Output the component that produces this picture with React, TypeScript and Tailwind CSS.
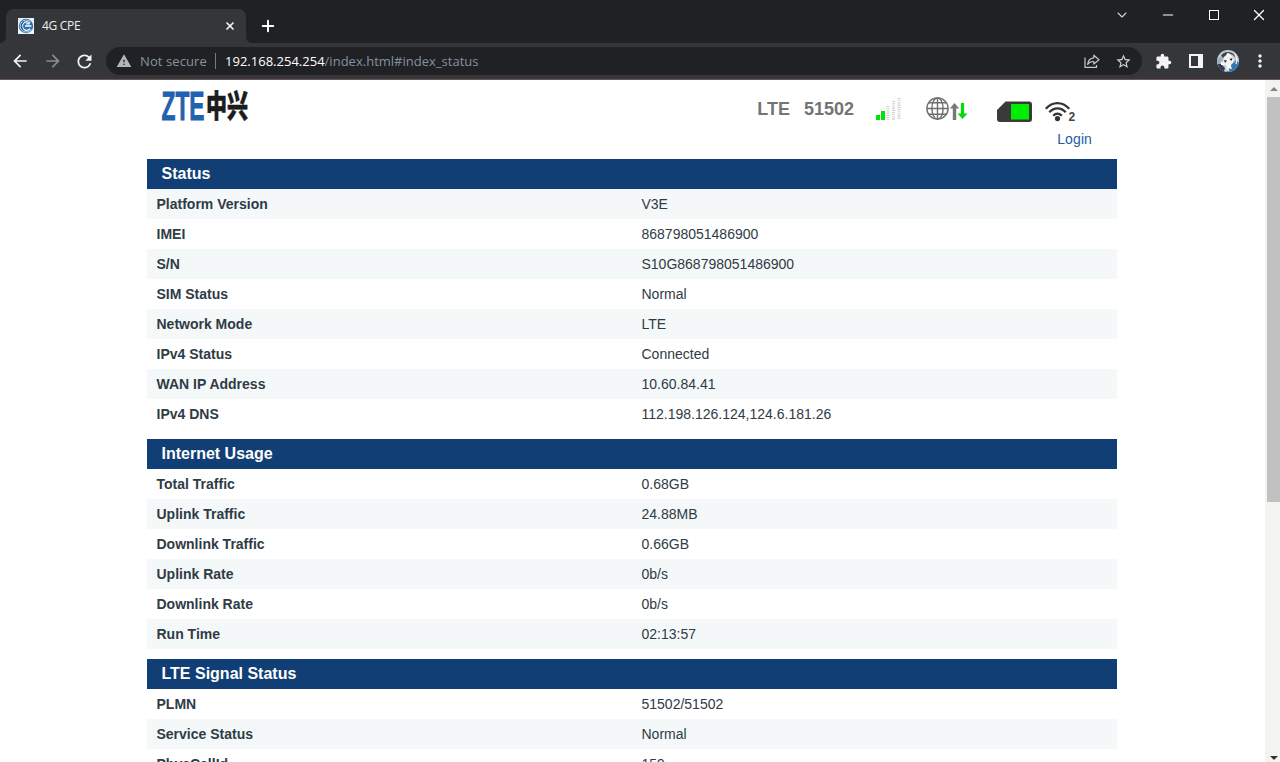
import { ChevronDown, Minus, Plus, X } from 'lucide-react'
import { MdArrowBack, MdArrowForward, MdExtension, MdMoreVert, MdRefresh, MdStarBorder, MdWarning } from 'react-icons/md'
import clsx from 'clsx'

type Row = [label: string, value: string]

const SECTIONS: { title: string; firstTinted: boolean; rows: Row[] }[] = [
  {
    title: 'Status',
    firstTinted: true,
    rows: [
      ['Platform Version', 'V3E'],
      ['IMEI', '868798051486900'],
      ['S/N', 'S10G868798051486900'],
      ['SIM Status', 'Normal'],
      ['Network Mode', 'LTE'],
      ['IPv4 Status', 'Connected'],
      ['WAN IP Address', '10.60.84.41'],
      ['IPv4 DNS', '112.198.126.124,124.6.181.26'],
    ],
  },
  {
    title: 'Internet Usage',
    firstTinted: false,
    rows: [
      ['Total Traffic', '0.68GB'],
      ['Uplink Traffic', '24.88MB'],
      ['Downlink Traffic', '0.66GB'],
      ['Uplink Rate', '0b/s'],
      ['Downlink Rate', '0b/s'],
      ['Run Time', '02:13:57'],
    ],
  },
  {
    title: 'LTE Signal Status',
    firstTinted: false,
    rows: [
      ['PLMN', '51502/51502'],
      ['Service Status', 'Normal'],
      ['PhysCellId', '159'],
    ],
  },
]

function Favicon() {
  return (
    <svg viewBox="0 0 16 16" className="h-4 w-4 shrink-0">
      <rect width="16" height="16" fill="#eef3f7" />
      <circle cx="8" cy="8" r="7.2" fill="#2c70ad" />
      <path d="M12.8 4.2A6 6 0 1 0 13.4 11" fill="none" stroke="#b9d2e8" strokeWidth="1" />
      <path d="M11.8 5.4A4.2 4.2 0 1 0 12 10.6M7 8h6.4M8.2 5.8h3.4" fill="none" stroke="#fff" strokeWidth="1.3" />
      <path d="M6 3.4C3 5 3 10 5.6 12.4" fill="none" stroke="#174b84" strokeWidth="1" />
    </svg>
  )
}

function Avatar() {
  return (
    <svg viewBox="0 0 22 22" className="h-[22px] w-[22px] shrink-0">
      <defs>
        <clipPath id="face">
          <circle cx="11" cy="11" r="11" />
        </clipPath>
      </defs>
      <g clipPath="url(#face)">
        <rect width="22" height="22" fill="#c3ccd3" />
        <path d="M4 6C7 0 17 1 19 8l-3-3-5-2-5 5z" fill="#39414e" />
        <path d="M0 9l5-3 1 4-3 4H0z" fill="#9fb0bf" />
        <path d="M7 7l6-3 4 5-1 6-6 2-4-4z" fill="#f2f1ef" />
        <path d="M7 10l3 .5-2 2.500zM12.500 9l3-1-1 3z" fill="#242a34" />
        <path d="M14 15l5-5 3 3v9H10z" fill="#2e77b3" />
        <path d="M1 14l3 0 4 4-1 3H2z" fill="#2b3d55" />
        <path d="M10 3l3 1-4 5zM13 13l-3 5 5 1zM4 11l4 4-4 0z" fill="#fff" />
        <path d="M18 4l2 5-1 5M9 17l3 4" stroke="#f0f2f4" strokeWidth="1.3" fill="none" />
      </g>
    </svg>
  )
}

function TabStrip() {
  return (
    <div className="flex h-[43px] shrink-0 items-start bg-[#202124]">
      <div className="flex h-[43px] w-[254px] items-end">
        <svg viewBox="0 0 6 6" className="h-1.5 w-1.5 shrink-0">
          <path d="M6 0v6H0a6 6 0 0 0 6-6z" fill="#35363a" />
        </svg>
        <div className="flex h-[34px] w-[240px] items-center rounded-t-lg bg-[#35363a] pr-2.5 pl-3">
          <Favicon />
          <span className="ml-2 flex-1 text-[12px] tracking-[-0.3px] text-[#eceef0]">4G CPE</span>
          <X className="h-3 w-3 text-[#f1f1f1]" strokeWidth={3.4} />
        </div>
        <svg viewBox="0 0 6 6" className="h-1.5 w-1.5 shrink-0">
          <path d="M0 0v6h6a6 6 0 0 1-6-6z" fill="#35363a" />
        </svg>
      </div>
      <Plus className="mt-[17px] ml-[5px] h-[18px] w-[18px] text-white" strokeWidth={2.6} />
      <div className="mt-1.5 ml-auto flex items-center text-white">
        <ChevronDown className="mr-[30px] h-4 w-4 text-[#cfcfcf]" strokeWidth={1.7} />
        <Minus className="mr-[33px] h-4 w-4" strokeWidth={1.6} />
        <span className="mr-[31px] h-2.5 w-2.5 border border-white" />
        <X className="mr-3 h-[18px] w-[18px]" strokeWidth={1.7} />
      </div>
    </div>
  )
}

function Toolbar() {
  return (
    <div className="flex h-[37px] shrink-0 items-center border-b border-[#6b5455] bg-[#35363a] pl-2.5">
      <MdArrowBack className="mr-[13px] h-5 w-5 text-[#f4f4f4]" />
      <MdArrowForward className="mr-[11px] h-5 w-5 text-[#8b8c8f]" />
      <MdRefresh className="mr-[11px] h-[21px] w-[21px] text-[#f4f4f4]" />
      <div className="flex h-7 w-[1036px] items-center rounded-full bg-[#202124] pr-2.5 pl-2.5">
        <MdWarning className="h-4 w-4 text-[#b4b5b8]" />
        <span className="ml-2 w-[75px] pt-px text-[13px] tracking-[0.1px] text-[#8a929c]">Not secure</span>
        <span className="h-4 w-px bg-[#777a7e]" />
        <span className="ml-[9px] flex-1 pt-px text-[13px] tracking-[0.01px] whitespace-nowrap text-[#8490a0]">
          <span className="text-white">192.168.254.254</span>/index.html#index_status
        </span>
        <svg viewBox="0 0 16 16" className="mr-[15px] h-4 w-4" fill="none" stroke="#c6c7c9" strokeWidth="1.2">
          <path d="M1 4.500V14.300H12.500V12" />
          <path d="M9.800 2.200L15 6.700L9.800 11V8.500C7 8.300 5 9.300 3.600 11.400C4 7.600 6.200 5.100 9.800 4.800Z" strokeLinejoin="round" />
        </svg>
        <MdStarBorder className="h-[17px] w-[17px] text-[#d3d4d6]" />
      </div>
      <MdExtension className="ml-[13px] h-[17px] w-[17px] text-[#f4f4f4]" />
      <svg viewBox="0 0 14 14" className="ml-[17px] h-[14px] w-[14px]">
        <rect width="14" height="14" fill="#f4f4f4" />
        <rect x="2" y="2" width="7" height="10" fill="#35363a" />
      </svg>
      <div className="mr-2.5 ml-3.5">
        <Avatar />
      </div>
      <MdMoreVert className="ml-px h-5 w-5 text-[#f4f4f4]" />
    </div>
  )
}

function Logo() {
  return (
    <svg viewBox="0 0 88 36" className="h-9 w-[88px] overflow-visible" role="img">
      <text
        x="-0.500"
        y="32"
        textLength="43"
        lengthAdjust="spacingAndGlyphs"
        fontFamily="Liberation Sans, sans-serif"
        fontWeight="700"
        fontSize="40"
        fill="#2261ac"
        stroke="#2261ac"
        strokeWidth="0.9"
      >
        ZTE
      </text>
      <text
        x="44"
        y="29"
        textLength="42"
        lengthAdjust="spacingAndGlyphs"
        fontFamily="Noto Sans CJK SC, sans-serif"
        fontWeight="900"
        fontSize="31"
        fill="#1c1c1c"
        stroke="#1c1c1c"
        strokeWidth="0.6"
      >
        中兴
      </text>
    </svg>
  )
}

function SignalBars() {
  return (
    <svg viewBox="0 0 25 23" className="h-[23px] w-[25px]">
      <path d="M0 18h4v5H0zM5 14h4v9H5z" fill="#00e408" />
      <g stroke="#cfcfcf" strokeWidth="3" strokeDasharray="1.1 1.1">
        <path d="M12 9v14" />
        <path d="M17.500 4v19" />
        <path d="M23 1v22" />
      </g>
    </svg>
  )
}

function GlobeTraffic() {
  return (
    <svg viewBox="0 0 42 24" className="h-6 w-[42px]">
      <g fill="none" stroke="#6e6e6e" strokeWidth="1.400">
        <circle cx="11.500" cy="11.500" r="10.600" />
        <ellipse cx="11.500" cy="11.500" rx="5.600" ry="10.600" />
        <path d="M11.500 1v21M1 11.500h21M2.800 5.800h17.400M2.800 17.200h17.400" />
      </g>
      <path d="M28.500 6l4.700 5.500h-3V23h-3.400V11.500h-3z" fill="#777" />
      <path d="M34.900 6h3.200v10.500h3.400L36.500 22l-5-5.500h3.400z" fill="#00dc0c" />
    </svg>
  )
}

function SimCard() {
  return (
    <svg viewBox="0 0 35 22" className="h-[22px] w-[35px]">
      <path d="M8.500 0.500H32a3 3 0 0 1 3 3V18a3 3 0 0 1-3 3H3a3 3 0 0 1-3-3V9z" fill="#3a3a3a" />
      <rect x="14" y="3" width="18" height="15.500" fill="#00ee04" />
    </svg>
  )
}

function Wifi() {
  return (
    <svg viewBox="0 0 31 22" className="h-[22px] w-[31px] overflow-visible">
      <g fill="none" stroke="#333" strokeWidth="2.300">
        <path d="M0.800 7.800C7.500 0.300 17.500 0.300 24.200 7.800" />
        <path d="M4.300 11.300C9 6 16 6 20.700 11.300" />
        <path d="M8.200 14.800C11 12 14 12 16.800 14.800" />
      </g>
      <circle cx="12.500" cy="17.600" r="2.600" fill="#333" />
      <text x="23.600" y="20" fontFamily="Liberation Sans, sans-serif" fontSize="12" fontWeight="700" fill="#444">
        2
      </text>
    </svg>
  )
}

function PageHeader() {
  return (
    <div className="flex h-[79px] items-start justify-between pr-[25px] pl-[15px]">
      <div className="pt-2">
        <Logo />
      </div>
      <div className="flex flex-col items-end">
        <div className="flex h-[49px] items-start pr-4">
          <span className="mt-[15px] text-[18px] leading-7 font-bold text-[#747474]">LTE</span>
          <span className="mt-[15px] ml-3.5 text-[18px] leading-7 font-bold text-[#747474]">51502</span>
          <span className="mt-[17px] ml-[22px]"><SignalBars /></span>
          <span className="mt-[17px] ml-[25px]"><GlobeTraffic /></span>
          <span className="mt-[21px] ml-[29px]"><SimCard /></span>
          <span className="mt-[21px] ml-[13px]"><Wifi /></span>
        </div>
        <a className="text-[14px] leading-5 tracking-[0.1px] text-[#1c5d9f]">Login</a>
      </div>
    </div>
  )
}

function Scrollbar() {
  return (
    <div className="flex w-[15px] shrink-0 flex-col items-end bg-[#f3f3f0]">
      <div className="flex h-[17px] w-[13px] items-center justify-center">
        <svg viewBox="0 0 8 4" className="h-1 w-2"><path d="M4 0l4 4H0z" fill="#858585" /></svg>
      </div>
      <div className="h-[405px] w-[13px] bg-[#c1c1c1]" />
      <div className="mt-auto flex h-[9px] w-[13px] items-center justify-center">
        <svg viewBox="0 0 8 4" className="h-1 w-2"><path d="M0 0h8L4 4z" fill="#333" /></svg>
      </div>
    </div>
  )
}

export default function App() {
  return (
    <div className="flex h-[762px] w-[1280px] flex-col overflow-hidden bg-white">
      <div className="shrink-0 font-['Open_Sans',sans-serif]">
        <TabStrip />
        <Toolbar />
      </div>
      <div className="flex min-h-0 flex-1 font-['Liberation_Sans',sans-serif]">
        <main className="flex-1 overflow-hidden pl-[147px]">
          <div className="w-[970px]">
            <PageHeader />
            {SECTIONS.map((section) => (
              <section key={section.title} className="mb-2.5">
                <h2 className="h-[30px] bg-[#113f75] pl-[14.5px] text-[16px] leading-[29px] font-bold text-white">
                  {section.title}
                </h2>
                {section.rows.map(([label, value], i) => (
                  <div
                    key={label}
                    className={clsx(
                      'grid h-[30px] grid-cols-2 text-[14px] leading-[30px] text-[#2f3b45]',
                      (i % 2 === 0) === section.firstTinted && 'bg-[#f4f8f9]'
                    )}
                  >
                    <span className="pl-[9.5px] font-bold">{label}</span>
                    <span className="pl-[9.5px]">{value}</span>
                  </div>
                ))}
              </section>
            ))}
          </div>
        </main>
        <Scrollbar />
      </div>
    </div>
  )
}
